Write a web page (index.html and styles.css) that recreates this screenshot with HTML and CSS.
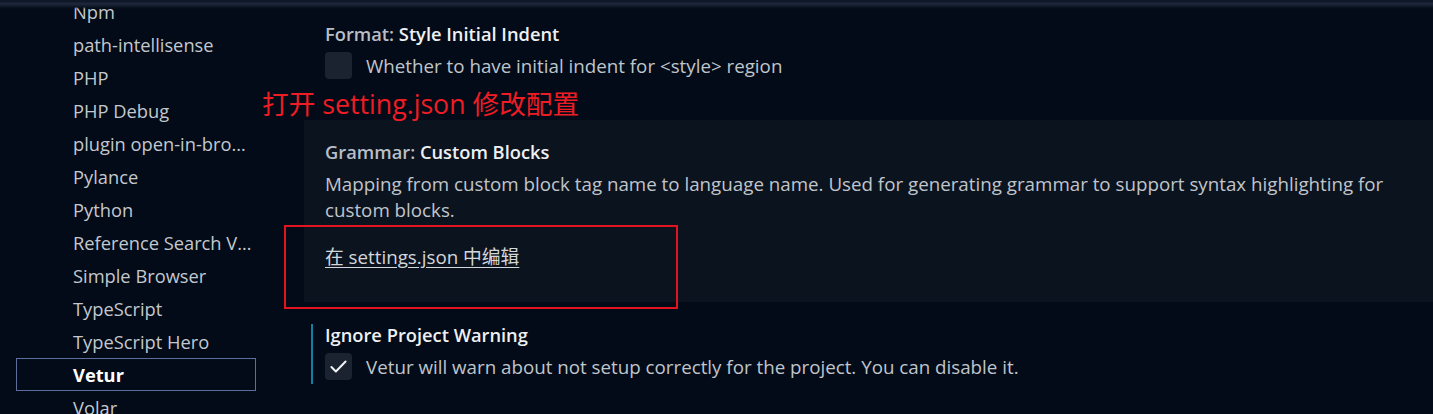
FILE: index.html
```html
<!DOCTYPE html>
<html lang="zh-CN">
<head>
<meta charset="utf-8">
<title>Settings - Vetur</title>
<link rel="stylesheet" href="styles.css">
</head>
<body>
<div class="top-shadow"></div>
<div class="layout">
  <nav class="toc">
    <ul class="toc-list">
      <li class="toc-row">Npm</li>
      <li class="toc-row">path-intellisense</li>
      <li class="toc-row">PHP</li>
      <li class="toc-row">PHP Debug</li>
      <li class="toc-row">plugin open-in-browser</li>
      <li class="toc-row">Pylance</li>
      <li class="toc-row">Python</li>
      <li class="toc-row">Reference Search View</li>
      <li class="toc-row">Simple Browser</li>
      <li class="toc-row">TypeScript</li>
      <li class="toc-row">TypeScript Hero</li>
      <li class="toc-row selected">Vetur</li>
      <li class="toc-row">Volar</li>
    </ul>
  </nav>
  <main class="settings">
    <section class="item item-first">
      <div class="inner">
        <div class="title"><span class="cat">Format: </span><span class="name">Style Initial Indent</span></div>
        <div class="bool-row">
          <span class="checkbox"></span>
          <span class="desc">Whether to have initial indent for &lt;style&gt; region</span>
        </div>
      </div>
    </section>
    <section class="item item-focused">
      <div class="inner">
        <div class="title"><span class="cat">Grammar: </span><span class="name">Custom Blocks</span></div>
        <p class="desc desc-block">Mapping from custom block tag name to language name. Used for generating grammar to support syntax highlighting for custom blocks.</p>
        <a class="edit-link" href="#">在 settings.json 中编辑</a>
      </div>
      <div class="red-box"></div>
    </section>
    <section class="item item-modified">
      <div class="inner">
        <div class="title"><span class="name">Ignore Project Warning</span></div>
        <div class="bool-row">
          <span class="checkbox checked"><svg viewBox="0 0 16 16" width="21" height="21"><polyline points="2.6,8.4 6,11.8 13.4,4.2" fill="none" stroke="#f2f4f6" stroke-width="1.5" stroke-linecap="round" stroke-linejoin="round"/></svg></span>
          <span class="desc">Vetur will warn about not setup correctly for the project. You can disable it.</span>
        </div>
      </div>
    </section>
    <div class="annotation">打开 setting.json 修改配置</div>
  </main>
</div>
</body>
</html>
```

FILE: styles.css
```css
* { box-sizing: border-box; }

html, body {
  margin: 0;
  padding: 0;
  height: 100%;
  overflow: hidden;
}

body {
  background: #020b17;
  font-family: "Open Sans", "Noto Sans CJK SC", sans-serif;
  font-size: 18.75px;
  color: #c3c8cf;
  position: relative;
}

.top-shadow {
  position: absolute;
  left: 0;
  right: 0;
  top: 0;
  height: 9px;
  background: linear-gradient(to bottom, #0f1828 0px, #0f1828 2px, #1e283a 3px, #1a2335 5px, #0a1422 7px, rgba(2, 11, 23, 0) 9px);
  z-index: 5;
}

.layout {
  display: flex;
}

.toc {
  width: 304px;
  flex: none;
}

.toc-list {
  list-style: none;
  margin: -5px 0 0 16px;
  padding: 0;
  width: 240px;
}

.toc-row {
  height: 33px;
  line-height: 30px;
  padding: 1px 0 0 56px;
  border: 1px solid transparent;
  font-size: 18.3px;
  white-space: nowrap;
  overflow: hidden;
  text-overflow: ellipsis;
  color: #c4c8ce;
}

.toc-row.selected {
  border-color: #5b6e9e;
  color: #ffffff;
  font-weight: 700;
}

.settings {
  flex: 1;
  position: relative;
}

.item {
  position: relative;
}

.inner {
  margin-left: 7px;
  padding-left: 12px;
  padding-right: 40px;
  border-left: 2px solid transparent;
}

.item-first {
  padding-top: 23px;
  height: 120px;
}

.item-focused {
  background: #0b131e;
  padding-top: 21px;
  height: 182px;
}

.item-modified {
  padding-top: 22px;
}

.item-modified .inner {
  border-left-color: #1380a3;
  padding-bottom: 4px;
}

.title {
  line-height: 22px;
  font-size: 18.3px;
  font-weight: 600;
  white-space: nowrap;
}

.cat {
  color: #b9bec6;
}

.name {
  color: #eef0f3;
}

.bool-row {
  display: flex;
  align-items: center;
  margin-top: 7px;
  gap: 14px;
}

.checkbox {
  flex: none;
  width: 27px;
  height: 27px;
  border-radius: 4px;
  background: #1b2230;
  display: flex;
  align-items: center;
  justify-content: center;
}

.desc {
  color: #c0c5cc;
  line-height: 26px;
}

.desc-block {
  margin: 8px 0 0;
  max-width: 1075px;
}

.edit-link {
  display: inline-block;
  margin-top: 23px;
  line-height: 22px;
  color: #d3d7dc;
  text-decoration: underline;
  text-underline-offset: 3px;
}

.red-box {
  position: absolute;
  left: -20px;
  top: 105px;
  width: 394px;
  height: 84px;
  border: 2px solid #e3141f;
}

.annotation {
  position: absolute;
  left: -42px;
  top: 85px;
  font-size: 26.7px;
  line-height: 38px;
  color: #ee1c24;
  font-family: "Open Sans", "Noto Sans CJK SC", sans-serif;
  white-space: nowrap;
}
```
